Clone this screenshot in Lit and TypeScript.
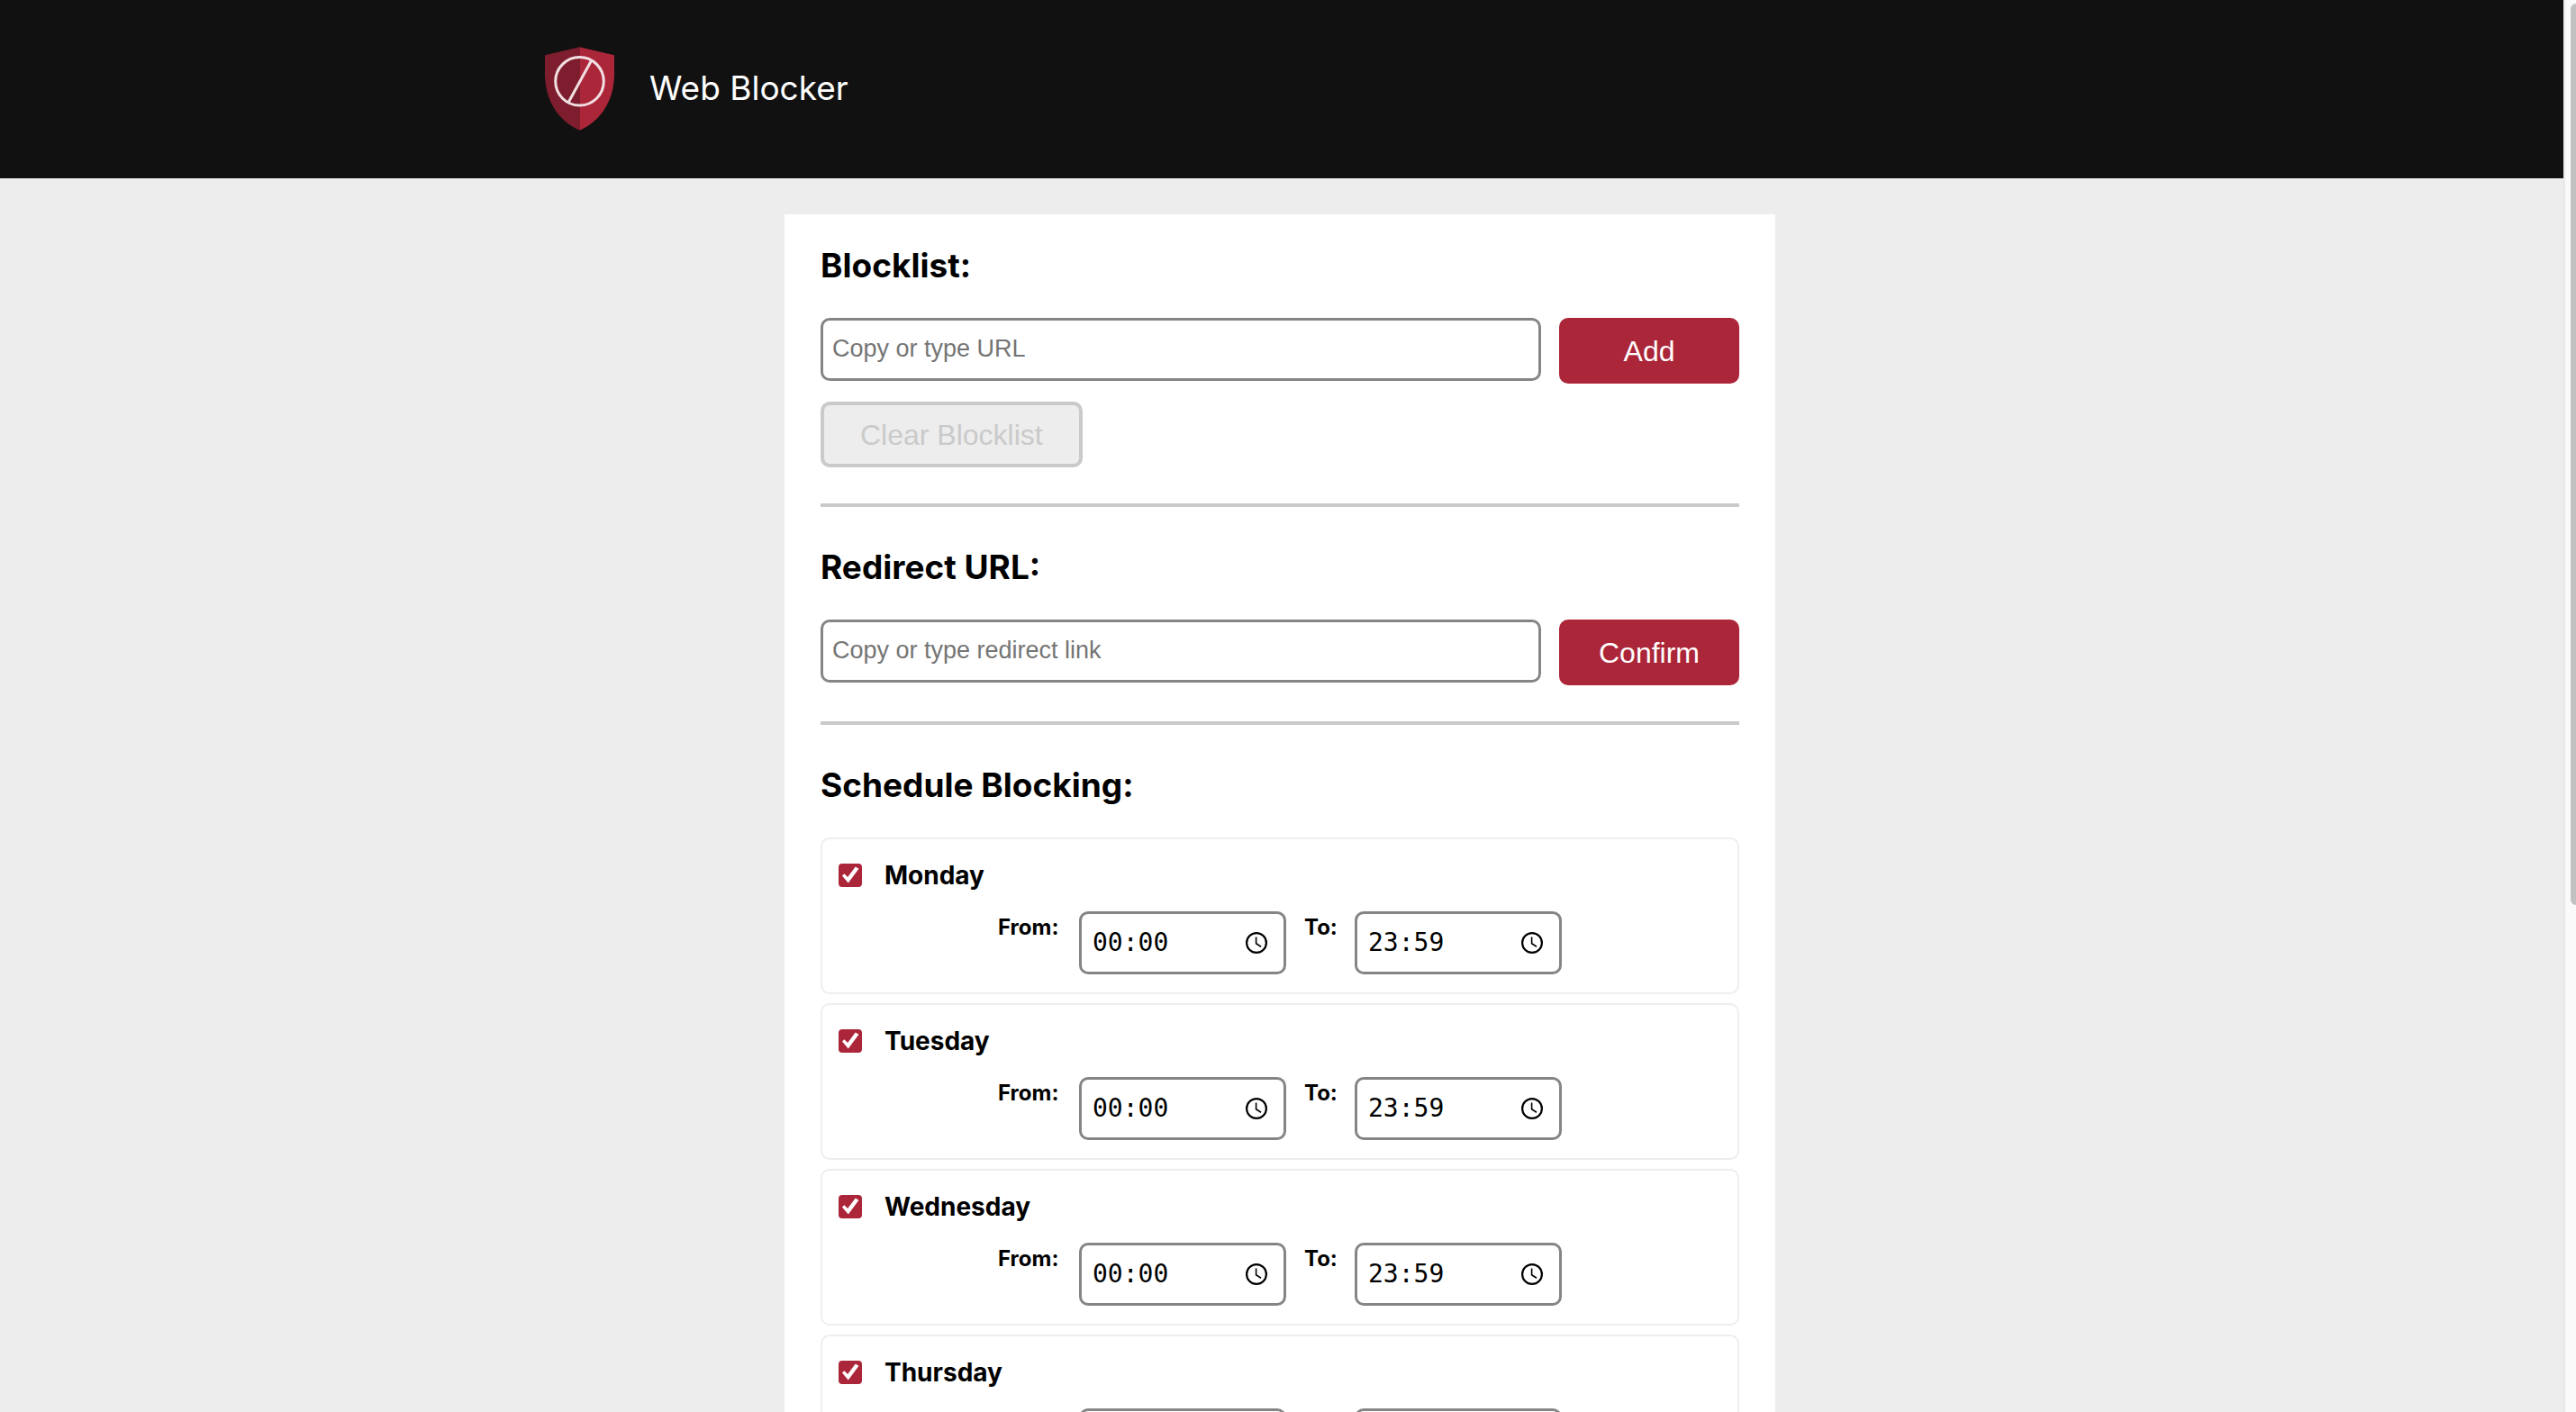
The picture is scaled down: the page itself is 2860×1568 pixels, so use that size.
import { LitElement, html, css, svg } from "lit";
import { customElement, property, state } from "lit/decorators.js";

interface DaySchedule {
  name: string;
  enabled: boolean;
  from: string;
  to: string;
}

const DAYS = ["Monday", "Tuesday", "Wednesday", "Thursday"];

const shieldIcon = svg`
  <path fill="#7e1d2e" d="M115 0 L0 27 V94 C2 175 40 243 115 277 Z" />
  <path fill="#ac2639" d="M115 0 L230 27 V94 C228 175 190 243 115 277 Z" />
  <circle cx="115" cy="114" r="80" fill="none" stroke="#f1dfe2" stroke-width="9" />
  <path d="M79 182 L154 45" fill="none" stroke="#f1dfe2" stroke-width="9" />
`;

@customElement("time-field")
class TimeField extends LitElement {
  @property() value = "";
  @property() label = "";

  static styles = css`
    :host {
      display: block;
    }
    .field {
      display: grid;
      grid-template-columns: 36px 230px;
      align-items: start;
      gap: 20px;
    }
    :host([wide]) .field {
      grid-template-columns: 70px 230px;
    }
    .label {
      font-family: Inter, "Open Sans", sans-serif;
      font-size: 24px;
      font-weight: 700;
      line-height: 36px;
    }
    .box {
      display: flex;
      align-items: center;
      box-sizing: border-box;
      height: 70px;
      padding: 0 18px 0 12px;
      border: 3px solid #858585;
      border-radius: 10px;
      background: #fff;
    }
    .time {
      flex: 1;
      min-width: 0;
      padding: 0;
      border: 0;
      outline: 0;
      background: none;
      color: #000;
      font-family: "DejaVu Sans Mono", monospace;
      font-size: 28px;
      line-height: 36px;
    }
    .picker {
      display: block;
      padding: 0;
      border: 0;
      background: none;
      line-height: 0;
    }
  `;

  render() {
    return html`
      <div class="field">
        <label class="label" for="time">${this.label}</label>
        <div class="box">
          <input
            class="time"
            id="time"
            type="text"
            inputmode="numeric"
            .value=${this.value}
          />
          <button class="picker" type="button" aria-label="Choose time">
            <svg width="24" height="24" viewBox="0 0 24 24" fill="none" stroke="#000">
              <circle cx="12" cy="12" r="10.9" stroke-width="2.2" />
              <path d="M11.6 5.6 V12.8 L17 16.2" stroke-width="1.6" />
            </svg>
          </button>
        </div>
      </div>
    `;
  }
}

@customElement("day-card")
class DayCard extends LitElement {
  @property({ attribute: false }) day!: DaySchedule;

  static styles = css`
    :host {
      display: block;
    }
    .card {
      box-sizing: border-box;
      padding: 20px 18px;
      border: 2px solid #eee;
      border-radius: 10px;
    }
    .head {
      display: flex;
      align-items: center;
      gap: 25px;
      height: 40px;
    }
    .check {
      appearance: none;
      display: grid;
      width: 26px;
      height: 26px;
      margin: 0;
      border: 2px solid #858585;
      border-radius: 4px;
      background: #fff;
    }
    .check:checked {
      border-color: #ac2639;
      background: #ac2639;
    }
    .check:checked::before {
      content: "";
      background: #fff;
      clip-path: polygon(9% 52%, 20% 42%, 37% 59%, 76% 7%, 93% 17%, 40% 89%);
    }
    .name {
      font-family: Inter, "Open Sans", sans-serif;
      font-size: 28px;
      font-weight: 700;
      line-height: 40px;
    }
    .times {
      display: flex;
      justify-content: center;
      gap: 20px;
      padding-top: 20px;
    }
  `;

  render() {
    const { name, enabled, from, to } = this.day;
    return html`
      <div class="card">
        <div class="head">
          <input class="check" id="enabled" type="checkbox" ?checked=${enabled} />
          <label class="name" for="enabled">${name}</label>
        </div>
        <div class="times">
          <time-field wide label="From:" .value=${from}></time-field>
          <time-field label="To:" .value=${to}></time-field>
        </div>
      </div>
    `;
  }
}

@customElement("app-root")
class AppRoot extends LitElement {
  @state() private days: DaySchedule[] = DAYS.map((name) => ({
    name,
    enabled: true,
    from: "00:00",
    to: "23:59",
  }));

  static styles = css`
    :host {
      display: block;
      color: #000;
      font-family: Inter, "Open Sans", sans-serif;
    }
    .page {
      display: grid;
      grid-template-columns: minmax(0, 1fr) 14px;
      height: 100vh;
      background: #ededed;
    }
    .view {
      overflow-y: auto;
      scrollbar-width: none;
    }
    .header {
      padding: 50px 4px 52px 0;
      background: #111;
    }
    .brand {
      display: flex;
      align-items: center;
      gap: 39px;
      max-width: 1632px;
      height: 96px;
      margin: 0 auto;
    }
    .logo {
      display: block;
      width: 77px;
      height: 93px;
    }
    .title {
      margin: 0;
      color: #fff;
      font-size: 37px;
      font-weight: 400;
      line-height: 56px;
    }
    .main {
      padding: 40px 4px 40px 0;
    }
    .panel {
      box-sizing: border-box;
      max-width: 1100px;
      margin: 0 auto;
      padding: 30px 40px 40px;
      background: #fff;
    }
    .section + .section {
      margin-top: 40px;
      padding-top: 40px;
      border-top: 4px solid #cacaca;
    }
    .heading {
      margin: 0 0 31px;
      font-size: 37px;
      font-weight: 700;
      line-height: 54px;
    }
    .row {
      display: flex;
      align-items: flex-start;
      gap: 20px;
    }
    .url {
      flex: 1;
      box-sizing: border-box;
      min-width: 0;
      height: 70px;
      padding: 0 10px 2px;
      border: 3px solid #858585;
      border-radius: 10px;
      background: #fff;
      font-family: "Liberation Sans", Arial, sans-serif;
      font-size: 27px;
    }
    .url::placeholder {
      color: #757575;
      opacity: 1;
    }
    .button {
      box-sizing: border-box;
      width: 200px;
      height: 73px;
      padding: 0;
      border: 4px solid #ac2639;
      border-radius: 10px;
      background: #ac2639;
      color: #fff;
      font-family: "Liberation Sans", Arial, sans-serif;
      font-size: 32px;
      line-height: 36px;
    }
    .button:disabled {
      width: auto;
      margin-top: 20px;
      padding: 0 40px;
      border-color: #cacaca;
      background: #ededed;
      color: #cacaca;
    }
    .days {
      display: grid;
      gap: 10px;
    }
    .track {
      padding: 4px 0 0 6px;
      border-left: 2px solid #e8e8e8;
      background: #fafafa;
    }
    .thumb {
      height: 64%;
      border-radius: 6px 0 0 6px;
      background: #c1c1c1;
    }
  `;

  render() {
    return html`
      <div class="page">
        <div class="view">
          <header class="header">
            <div class="brand">
              <svg class="logo" viewBox="0 0 230 277" aria-hidden="true">${shieldIcon}</svg>
              <h1 class="title">Web Blocker</h1>
            </div>
          </header>
          <main class="main">
            <div class="panel">
              <section class="section">
                <h2 class="heading" id="blocklist">Blocklist:</h2>
                <div class="row">
                  <input
                    class="url"
                    type="text"
                    aria-labelledby="blocklist"
                    placeholder="Copy or type URL"
                  />
                  <button class="button" type="button">Add</button>
                </div>
                <button class="button" type="button" disabled>Clear Blocklist</button>
              </section>
              <section class="section">
                <h2 class="heading" id="redirect">Redirect URL:</h2>
                <div class="row">
                  <input
                    class="url"
                    type="text"
                    aria-labelledby="redirect"
                    placeholder="Copy or type redirect link"
                  />
                  <button class="button" type="button">Confirm</button>
                </div>
              </section>
              <section class="section">
                <h2 class="heading">Schedule Blocking:</h2>
                <div class="days">
                  ${this.days.map((day) => html`<day-card .day=${day}></day-card>`)}
                </div>
              </section>
            </div>
          </main>
        </div>
        <div class="track" aria-hidden="true"><div class="thumb"></div></div>
      </div>
    `;
  }
}
